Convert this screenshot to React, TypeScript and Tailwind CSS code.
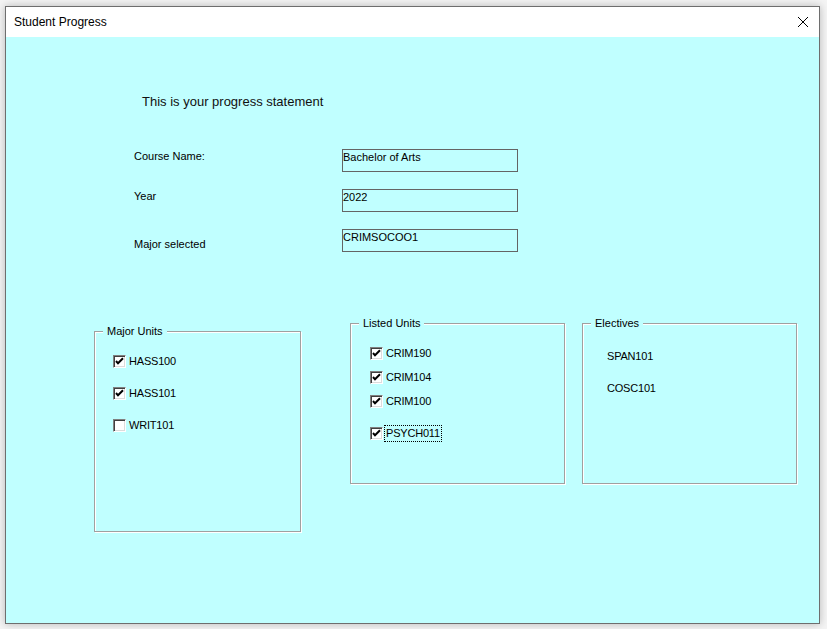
import React from "react";

const font = { fontFamily: '"Liberation Sans", Arial, sans-serif' };

function Check({ checked }: { checked: boolean }) {
  return (
    <div className="w-[13px] h-[13px] bg-white border-t border-l border-t-[#808080] border-l-[#808080] border-b border-r border-b-white border-r-white shadow-[inset_1px_1px_0_#404040,inset_-1px_-1px_0_#dcdcdc] flex items-center justify-center shrink-0">
      {checked && (
        <svg width="9" height="9" viewBox="0 0 9 9">
          <path d="M1 4 L3 6.3 L8 1.2" stroke="#000" strokeWidth="2" fill="none" />
        </svg>
      )}
    </div>
  );
}

function CheckRow({ label, checked, focus, mt }: { label: string; checked: boolean; focus?: boolean; mt: string }) {
  return (
    <div className={`flex items-center ${mt}`}>
      <Check checked={checked} />
      {focus ? (
        <span className="ml-[1px] text-[11px] leading-[15px] text-black px-[1px] border border-dotted border-black tracking-[-0.2px]">
          {label}
        </span>
      ) : (
        <span className="ml-[3px] text-[11px] leading-[13px] text-black tracking-[-0.2px]">{label}</span>
      )}
    </div>
  );
}

function Frame({
  title,
  className,
  children,
}: {
  title: string;
  className: string;
  children: React.ReactNode;
}) {
  return (
    <div
      className={`relative border border-[#a0a0a0] shadow-[1px_1px_0_#ffffff,inset_1px_1px_0_#ffffff] ${className}`}
    >
      <span className="absolute left-[8px] top-[-7px] px-[4px] bg-[#c0ffff] text-[11px] leading-[13px] text-black">
        {title}
      </span>
      {children}
    </div>
  );
}

function TextBox({ value }: { value: string }) {
  return (
    <div className="w-[176px] h-[23px] border border-[#646464] pt-[1px] text-[11px] leading-[13px] text-black">
      {value}
    </div>
  );
}

export default function App() {
  return (
    <div className="w-[827px] h-[629px] bg-[#f4f4f4] overflow-hidden" style={font}>
      <div className="ml-[5px] mt-[6px] w-[815px] h-[618px] border border-[#6e6e6e] flex flex-col shadow-[0_0_8px_rgba(0,0,0,0.25)]">
        <div className="h-[30px] bg-white flex items-center justify-between pl-[8px] pr-[10px]">
          <span className="text-[12px] text-black">Student Progress</span>
          <svg width="12" height="12" viewBox="0 0 12 12">
            <path d="M1 1 L11 11 M11 1 L1 11" stroke="#000" strokeWidth="1" />
          </svg>
        </div>
        <div className="flex-1 bg-[#c0ffff] flex flex-col">
          <div className="ml-[136px] mt-[57px] text-[13px] leading-[16px] text-[#111]">
            This is your progress statement
          </div>
          <div className="ml-[128px] mt-[39px] flex flex-col gap-[17px]">
            <div className="flex items-start">
              <div className="w-[208px] text-[11px] leading-[13px] pt-[1px] text-black">Course Name:</div>
              <TextBox value="Bachelor of Arts" />
            </div>
            <div className="flex items-start">
              <div className="w-[208px] text-[11px] leading-[13px] pt-[1px] text-black">Year</div>
              <TextBox value="2022" />
            </div>
            <div className="flex items-start">
              <div className="w-[208px] text-[11px] leading-[13px] pt-[9px] text-black">Major selected</div>
              <TextBox value="CRIMSOCOO1" />
            </div>
          </div>
          <div className="ml-[88px] mt-[71px] flex items-start">
            <Frame title="Major Units" className="w-[207px] h-[201px] mt-[8px] pl-[18px] pt-[23px]">
              <CheckRow label="HASS100" checked mt="mt-0" />
              <CheckRow label="HASS101" checked mt="mt-[19px]" />
              <CheckRow label="WRIT101" checked={false} mt="mt-[19px]" />
            </Frame>
            <Frame title="Listed Units" className="w-[215px] h-[161px] ml-[49px] pl-[19px] pt-[23px]">
              <CheckRow label="CRIM190" checked mt="mt-0" />
              <CheckRow label="CRIM104" checked mt="mt-[11px]" />
              <CheckRow label="CRIM100" checked mt="mt-[11px]" />
              <CheckRow label="PSYCH011" checked focus mt="mt-[17px]" />
            </Frame>
            <Frame title="Electives" className="w-[215px] h-[161px] ml-[17px] pl-[24px] pt-[26px]">
              <div className="text-[11px] leading-[13px] text-black tracking-[-0.2px]">SPAN101</div>
              <div className="text-[11px] leading-[13px] text-black mt-[19px] tracking-[-0.2px]">COSC101</div>
            </Frame>
          </div>
        </div>
      </div>
    </div>
  );
}
